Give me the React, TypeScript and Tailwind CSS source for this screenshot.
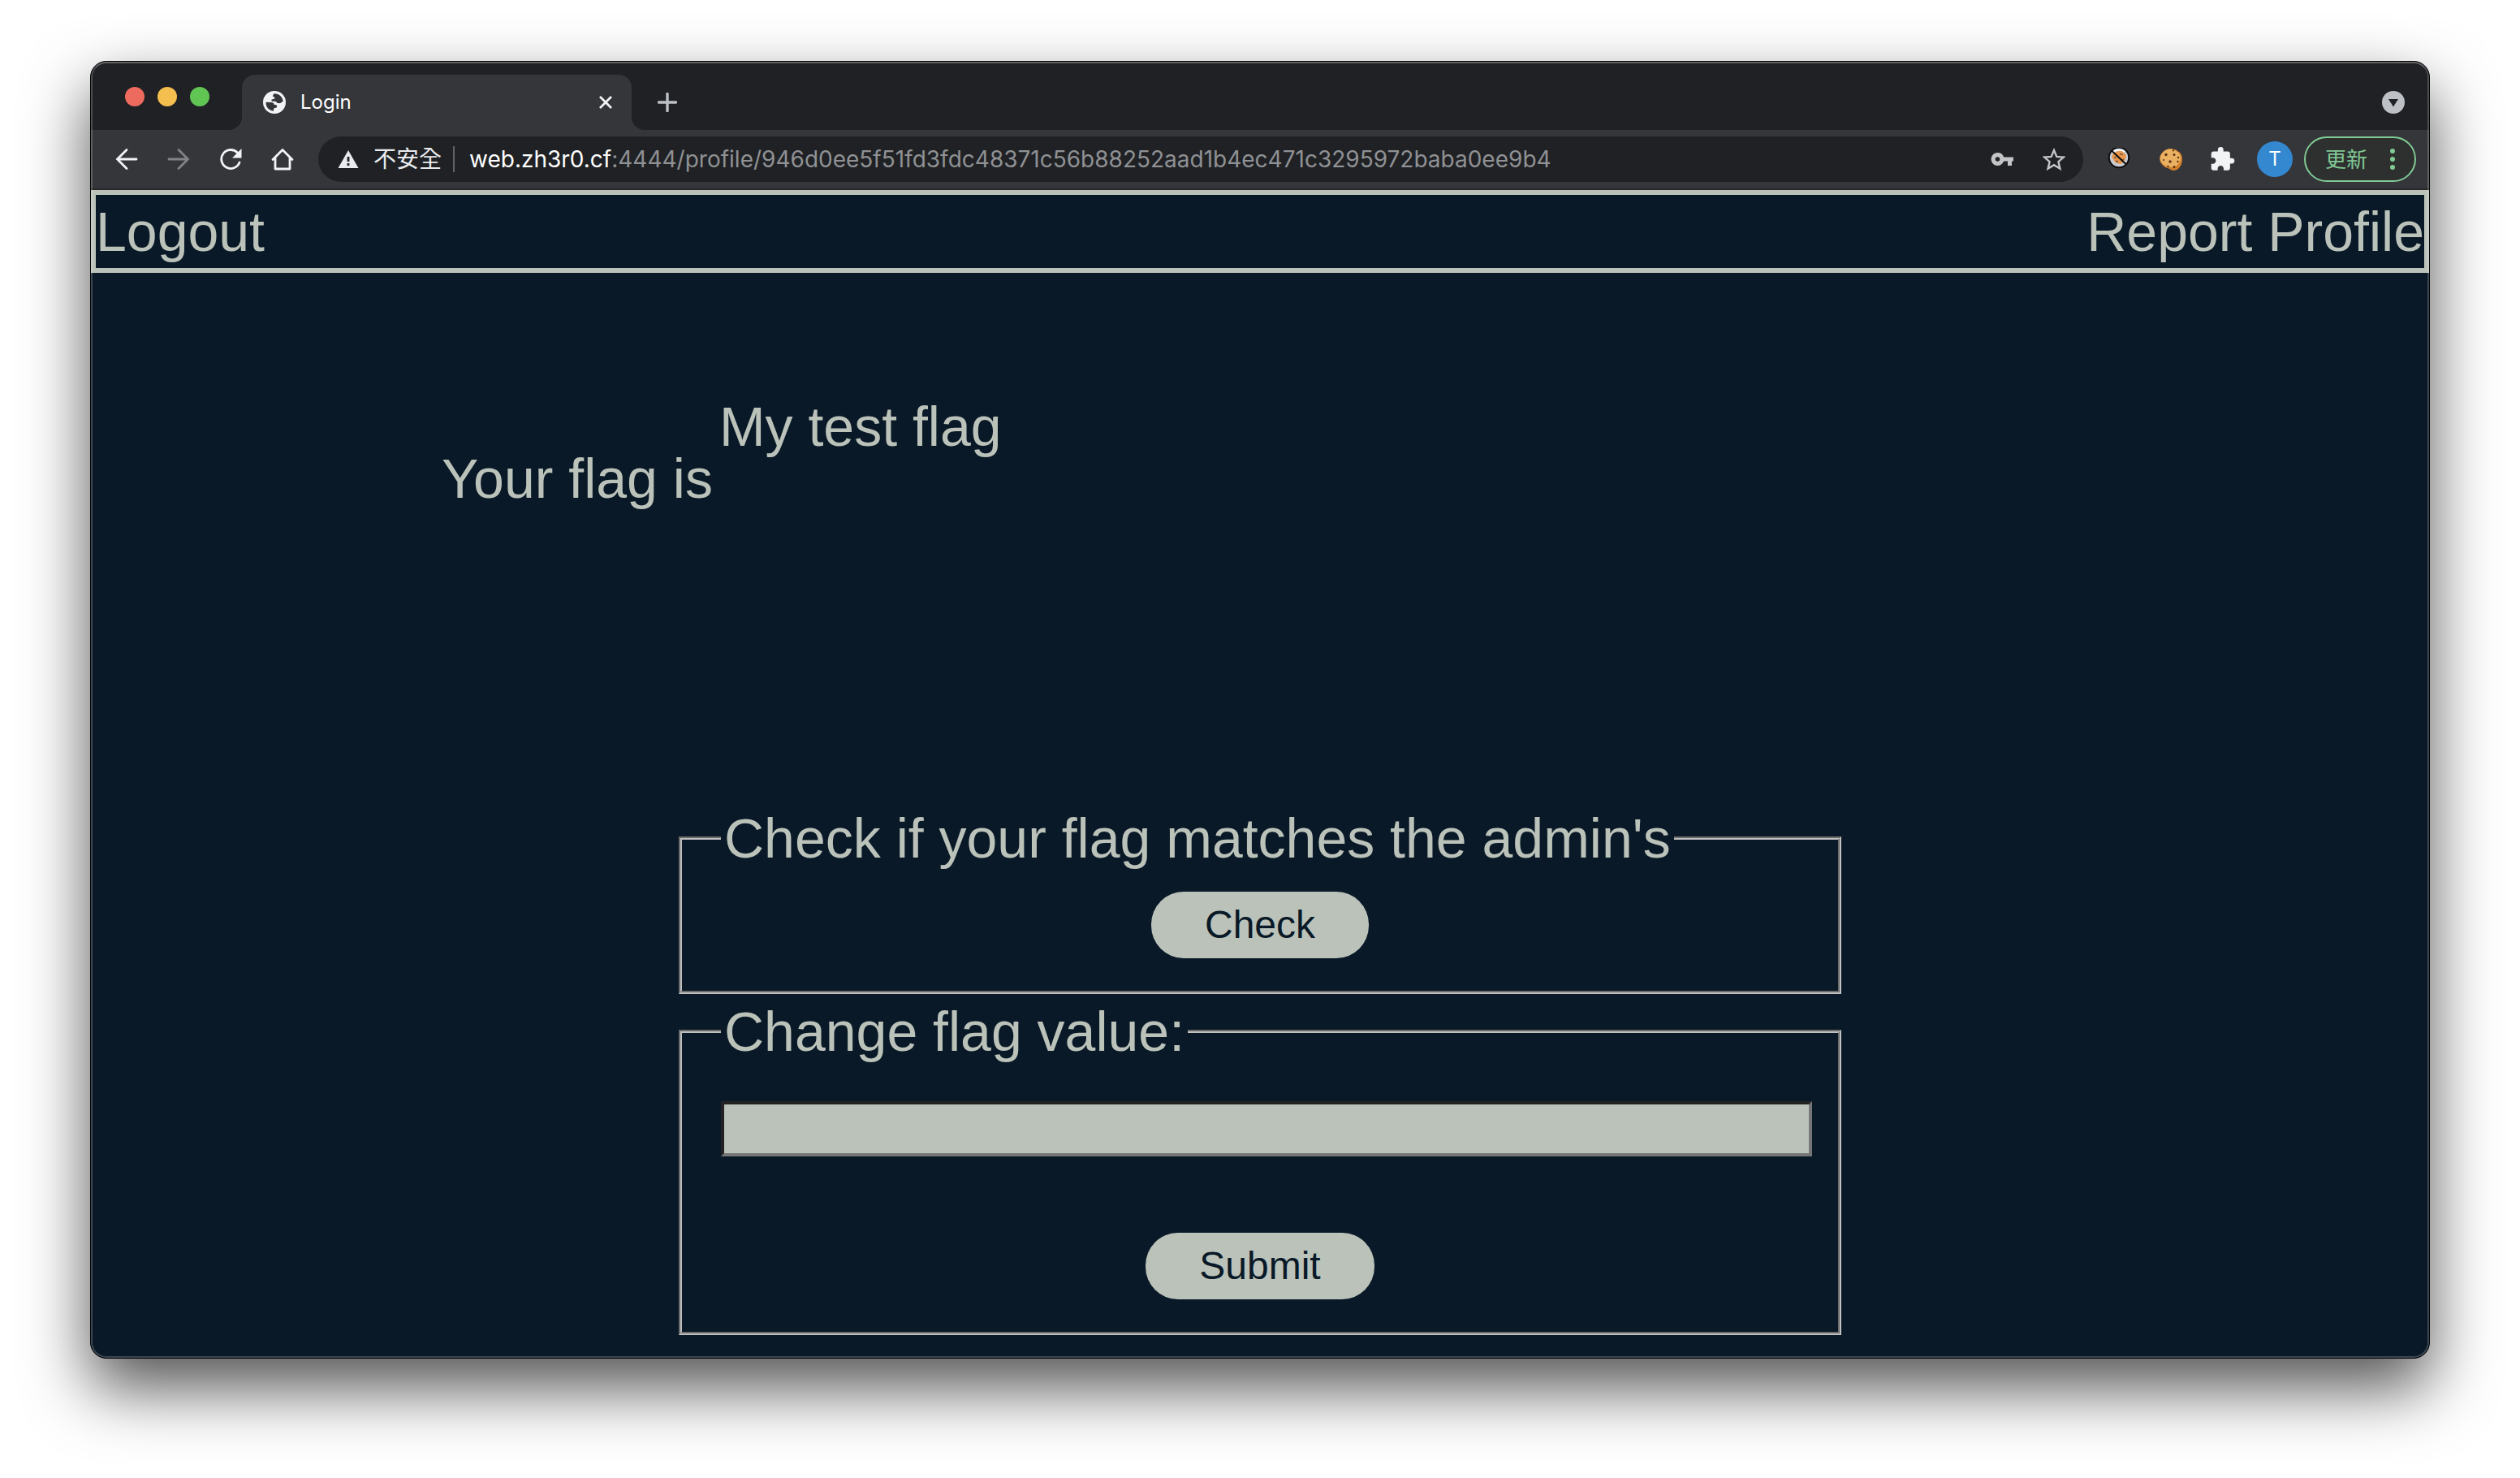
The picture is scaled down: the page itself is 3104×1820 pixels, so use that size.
import React from "react";

const pageText = "font-['Liberation_Sans',sans-serif] text-[68px] text-[#bbc2ba]";

function Globe() {
  return (
    <svg viewBox="0 0 28 28" className="size-7 shrink-0" aria-hidden="true">
      <circle cx="14" cy="14" r="14" fill="#f1f3f4" />
      <path
        d="M3.500 13.800L9.500 14c3 0 4 1.200 4.200 3h1.500c1.600 0 2 1 1.800 2.200l-.2 1.300-2.800.4c-.7.9-1 2-1.200 3.900C7 24.200 3.300 19.800 3.500 13.800zM13.500 3.300l-1 1.500c-.6 1-.4 2.400.6 2.800l1.400.4c0 1-.5 1.700-1.400 1.900l-2.600.5v2.300h4c1.800 0 2.600 1.200 2.900 2.400h2.200c1.600.2 2.800-.6 3.400-1.600l1.700-.4C24.500 8 20 3 13.500 3.300z"
        fill="#35363a"
      />
    </svg>
  );
}

function CloseIcon() {
  return (
    <svg viewBox="0 0 16 16" className="size-4" aria-hidden="true">
      <path d="M1 1l14 14M15 1L1 15" stroke="#f1f3f4" strokeWidth="2.800" />
    </svg>
  );
}

function PlusIcon() {
  return (
    <svg viewBox="0 0 24 24" className="size-6" aria-hidden="true">
      <path d="M12 1.500v21M1.500 12h21" stroke="#bdc1c6" strokeWidth="3.400" strokeLinecap="round" />
    </svg>
  );
}

function TabSearchIcon() {
  return (
    <svg viewBox="0 0 28 28" className="size-7" aria-hidden="true">
      <circle cx="14" cy="14" r="14" fill="#bdc1c6" />
      <path d="M8 10h12l-6 9.500z" fill="#202124" />
    </svg>
  );
}

function ArrowIcon({ flip }: { flip?: boolean }) {
  return (
    <svg viewBox="0 0 28 28" className={flip ? "size-7 rotate-180" : "size-7"} aria-hidden="true">
      <path
        d="M14 2.500L2.500 14 14 25.500M2.500 14H26"
        stroke={flip ? "#818386" : "#f1f3f4"}
        strokeWidth="2.800"
        strokeLinecap="round"
        fill="none"
      />
    </svg>
  );
}

function ReloadIcon() {
  return (
    <svg viewBox="0 0 28 28" className="size-7" aria-hidden="true">
      <path d="M22.500 6A11.500 11.500 0 1 0 25 18" stroke="#f1f3f4" strokeWidth="2.800" strokeLinecap="round" fill="none" />
      <path d="M27.500 1v11.500H16z" fill="#f1f3f4" />
    </svg>
  );
}

function HomeIcon() {
  return (
    <svg viewBox="0 0 28 28" className="size-7" aria-hidden="true">
      <path
        d="M2 14.500L14 2.500l12 12M5 12.500V26H23V12.500"
        stroke="#f1f3f4"
        strokeWidth="2.800"
        strokeLinecap="round"
        strokeLinejoin="round"
        fill="none"
      />
    </svg>
  );
}

function WarningIcon() {
  return (
    <svg viewBox="0 0 26 24" className="h-6 w-[26px] shrink-0" aria-hidden="true">
      <path d="M13 1l12.500 22H.5z" fill="#e8eaed" />
      <path d="M11.600 9h2.800v6h-2.800zM11.600 17h2.800v3h-2.800z" fill="#202124" />
    </svg>
  );
}

function KeyIcon() {
  return (
    <svg viewBox="0 0 28 20" className="h-5 w-7" aria-hidden="true">
      <path
        fillRule="evenodd"
        d="M8.500 2a8 8 0 1 0 7.600 10.600H21V18h5v-5.400h2V7.400H16.100A8 8 0 0 0 8.500 2zm0 5.200a2.800 2.800 0 1 1 0 5.600 2.800 2.800 0 0 1 0-5.600z"
        fill="#c3c4c6"
      />
    </svg>
  );
}

function StarIcon() {
  return (
    <svg viewBox="0 0 28 28" className="size-7" aria-hidden="true">
      <path
        d="M14 3l3.300 7.900 8.600.7-6.500 5.600 2 8.400L14 21.100l-7.400 4.500 2-8.400-6.500-5.600 8.600-.7z"
        stroke="#c3c4c6"
        strokeWidth="2.400"
        fill="none"
      />
    </svg>
  );
}

function BlockedCookieIcon() {
  return (
    <svg viewBox="0 2 28 28" className="size-7" aria-hidden="true">
      <circle cx="14" cy="14" r="12" fill="#c9ccd4" />
      <path d="M5 12c3-5 8-7 13-6l5 5c0 5-3 9-7 11-5 0-9-3-11-10z" fill="#e8984c" />
      <path d="M6 8c3-4 12-5 15-1" stroke="#f4f5f7" strokeWidth="2.400" fill="none" />
      <path d="M15 9.500l4 1M8 13.500l3 1M10 18.500l3 .5M17 18l3-2" stroke="#7a5a4a" strokeWidth="1.800" />
      <circle cx="14" cy="14" r="12.200" fill="none" stroke="#0c0c0c" strokeWidth="2" />
      <path d="M5 5.500l18 17" stroke="#0c0c0c" strokeWidth="2" />
    </svg>
  );
}

function CookieIcon() {
  return (
    <svg viewBox="0 0 28 28" className="size-7" aria-hidden="true">
      <path d="M14 1c2 0 3 1.200 5 1.200s3 2 4.500 2.600S28 9 28 14c0 8-5 14-11 14-3 0-4-2.500-7-3S.5 20 .2 14 6 1 14 1z" fill="#d5802c" />
      <path d="M13 1.500c2 0 3 1.300 5 1.300s3 2 4.500 2.600S26 9 26 12c0 7-5 12-11 12-3 0-4-1-6.500-1.500S.8 18 .8 13 6 1.500 13 1.500z" fill="#e9b161" />
      <g fill="#5f3310">
        <circle cx="8" cy="8.500" r="1.700" />
        <circle cx="18" cy="8.500" r="1.500" />
        <circle cx="17" cy="3.500" r="1.100" />
        <circle cx="23" cy="12" r="1.200" />
        <circle cx="5" cy="15" r="1.100" />
        <circle cx="13" cy="17" r="1.700" />
        <circle cx="22.500" cy="17" r="1.200" />
        <circle cx="10.500" cy="23" r="1.200" />
        <circle cx="18" cy="23.500" r="1.500" />
      </g>
    </svg>
  );
}

function PuzzleIcon() {
  return (
    <svg viewBox="1.500 1 22 22" className="size-[30px]" aria-hidden="true">
      <path
        d="M20.500 11H19V7c0-1.100-.9-2-2-2h-4V3.500a2.500 2.500 0 0 0-5 0V5H4c-1.100 0-1.990.9-1.990 2v3.800H3.500c1.490 0 2.700 1.210 2.700 2.700s-1.210 2.700-2.700 2.700H2V20c0 1.100.9 2 2 2h3.800v-1.500c0-1.490 1.210-2.700 2.700-2.700s2.700 1.210 2.700 2.700V22H17c1.100 0 2-.9 2-2v-4h1.500a2.500 2.500 0 0 0 0-5z"
        fill="#f1f3f4"
      />
    </svg>
  );
}

function IconButton({ label, children }: { label: string; children: React.ReactNode }) {
  return (
    <button type="button" aria-label={label} className="flex w-8 shrink-0 items-center justify-center">
      {children}
    </button>
  );
}

function TabStrip() {
  return (
    <div className="flex h-[84px] items-end bg-[#202124]">
      <div className="flex w-[186px] shrink-0 gap-4 self-center pt-0.5 pl-[42px]">
        <button type="button" aria-label="Close window" className="size-6 rounded-full bg-[#ed6a5e]" />
        <button type="button" aria-label="Minimize window" className="size-6 rounded-full bg-[#f5bf4f]" />
        <button type="button" aria-label="Zoom window" className="size-6 rounded-full bg-[#61c554]" />
      </div>
      <div className="relative flex h-[68px] w-[480px] items-center rounded-t-[16px] bg-[#35363a] pr-6 pl-[26px]">
        <svg viewBox="0 0 16 16" className="absolute bottom-0 -left-4 size-4" aria-hidden="true">
          <path d="M16 0v16H0A16 16 0 0 0 16 0z" fill="#35363a" />
        </svg>
        <svg viewBox="0 0 16 16" className="absolute -right-4 bottom-0 size-4" aria-hidden="true">
          <path d="M0 0v16h16A16 16 0 0 1 0 0z" fill="#35363a" />
        </svg>
        <Globe />
        <span className="ml-[18px] flex-1 text-[24px] text-white">Login</span>
        <button type="button" aria-label="Close tab" className="p-0">
          <CloseIcon />
        </button>
      </div>
      <button type="button" aria-label="New tab" className="ml-8 flex h-[68px] items-center">
        <PlusIcon />
      </button>
      <button type="button" aria-label="Search tabs" className="mr-[30px] ml-auto flex h-[68px] items-center">
        <TabSearchIcon />
      </button>
    </div>
  );
}

function Toolbar() {
  return (
    <div className="flex h-[74px] items-center border-b-2 border-[#28282b] bg-[#35363a] pr-4 pl-7">
      <div className="flex shrink-0 gap-8">
        <IconButton label="Back">
          <ArrowIcon />
        </IconButton>
        <IconButton label="Forward">
          <ArrowIcon flip />
        </IconButton>
        <IconButton label="Reload">
          <ReloadIcon />
        </IconButton>
        <IconButton label="Home">
          <HomeIcon />
        </IconButton>
      </div>
      <div className="ml-7 flex h-14 min-w-0 flex-1 items-center rounded-full bg-[#202124] pr-5 pl-6 text-[28px]">
        <WarningIcon />
        <span className="ml-[18px] shrink-0 text-[#e8eaed]">不安全</span>
        <span className="mx-[14px] h-8 w-0.5 shrink-0 bg-[#5f6368]" />
        <span className="ml-1 min-w-0 flex-1 truncate text-[#8f9194]">
          <span className="text-white">web.zh3r0.cf</span>
          :4444/profile/946d0ee5f51fd3fdc48371c56b88252aad1b4ec471c3295972baba0ee9b4
        </span>
        <div className="flex shrink-0 gap-8">
          <IconButton label="Passwords">
            <KeyIcon />
          </IconButton>
          <IconButton label="Bookmark">
            <StarIcon />
          </IconButton>
        </div>
      </div>
      <div className="ml-7 flex shrink-0 items-center gap-8">
        <IconButton label="Cookie blocker">
          <BlockedCookieIcon />
        </IconButton>
        <IconButton label="Cookie editor">
          <CookieIcon />
        </IconButton>
        <IconButton label="Extensions">
          <PuzzleIcon />
        </IconButton>
      </div>
      <button type="button" aria-label="Profile T" className="ml-[26px] size-11 shrink-0 rounded-full bg-[#3488d0] text-[24px] text-white">
        T
      </button>
      <button
        type="button"
        className="ml-[14px] flex h-14 w-[138px] shrink-0 items-center rounded-full border-2 border-[#81c995] bg-[#2d302f] pl-6 text-[26px] text-[#81c995]"
      >
        更新
        <svg viewBox="0 0 6 26" className="ml-7 h-[26px] w-1.5" fill="#81c995" aria-hidden="true">
          <circle cx="3" cy="3" r="3" />
          <circle cx="3" cy="13" r="3" />
          <circle cx="3" cy="23" r="3" />
        </svg>
      </button>
    </div>
  );
}

function Pill({ children }: { children: React.ReactNode }) {
  return (
    <button type="submit" className="h-[82px] rounded-[40px] bg-[#bbc2ba] px-[66px] text-[48px] text-[#091927]">
      {children}
    </button>
  );
}

const fieldsetStyle = "min-w-0 border-4 border-[#c0c0c0] px-12 pb-10 [border-style:groove]";

export default function App() {
  return (
    <div className="flex min-h-screen flex-col bg-white px-[111px] pt-[75px] pb-[147px] font-[Inter,'Noto_Sans_CJK_TC',sans-serif]">
      <div className="relative flex flex-1 flex-col overflow-hidden rounded-[20px] border border-black bg-[#091927] shadow-[0_36px_80px_rgba(0,0,0,0.68)]">
        <div className="pointer-events-none absolute inset-0 rounded-[19px] border-2 border-white/20 border-t-white/30" />
        <TabStrip />
        <Toolbar />
        <main className={pageText}>
          <nav className="flex justify-between border-6 border-[#bbc2ba] leading-[90px]">
            <a href="#logout">Logout</a>
            <a href="#report">Report Profile</a>
          </nav>
          <div className="mt-[151px] flex gap-2 px-[15%] leading-[76px]">
            <p className="pt-16">Your flag is</p>
            <p>My test flag</p>
          </div>
          <div className="mx-auto mt-[367px] flex w-1/2 flex-col gap-2 px-1 pb-7 leading-[76px]">
            <form>
              <fieldset className={fieldsetStyle}>
                <legend className="px-1">Check if your flag matches the admin's</legend>
                <div className="flex justify-center pt-7">
                  <Pill>Check</Pill>
                </div>
              </fieldset>
            </form>
            <form>
              <fieldset className={fieldsetStyle}>
                <legend className="px-1">
                  <label htmlFor="flag">Change flag value:</label>
                </legend>
                <input
                  id="flag"
                  type="text"
                  className="mt-12 block h-[68px] w-[calc(100%+16px)] border-4 border-t-[#222] border-r-[#767676] border-b-[#767676] border-l-[#222] bg-[#bbc2ba] px-1 text-[48px] text-[#091927]"
                />
                <div className="mt-[94px] flex justify-center">
                  <Pill>Submit</Pill>
                </div>
              </fieldset>
            </form>
          </div>
        </main>
      </div>
    </div>
  );
}
